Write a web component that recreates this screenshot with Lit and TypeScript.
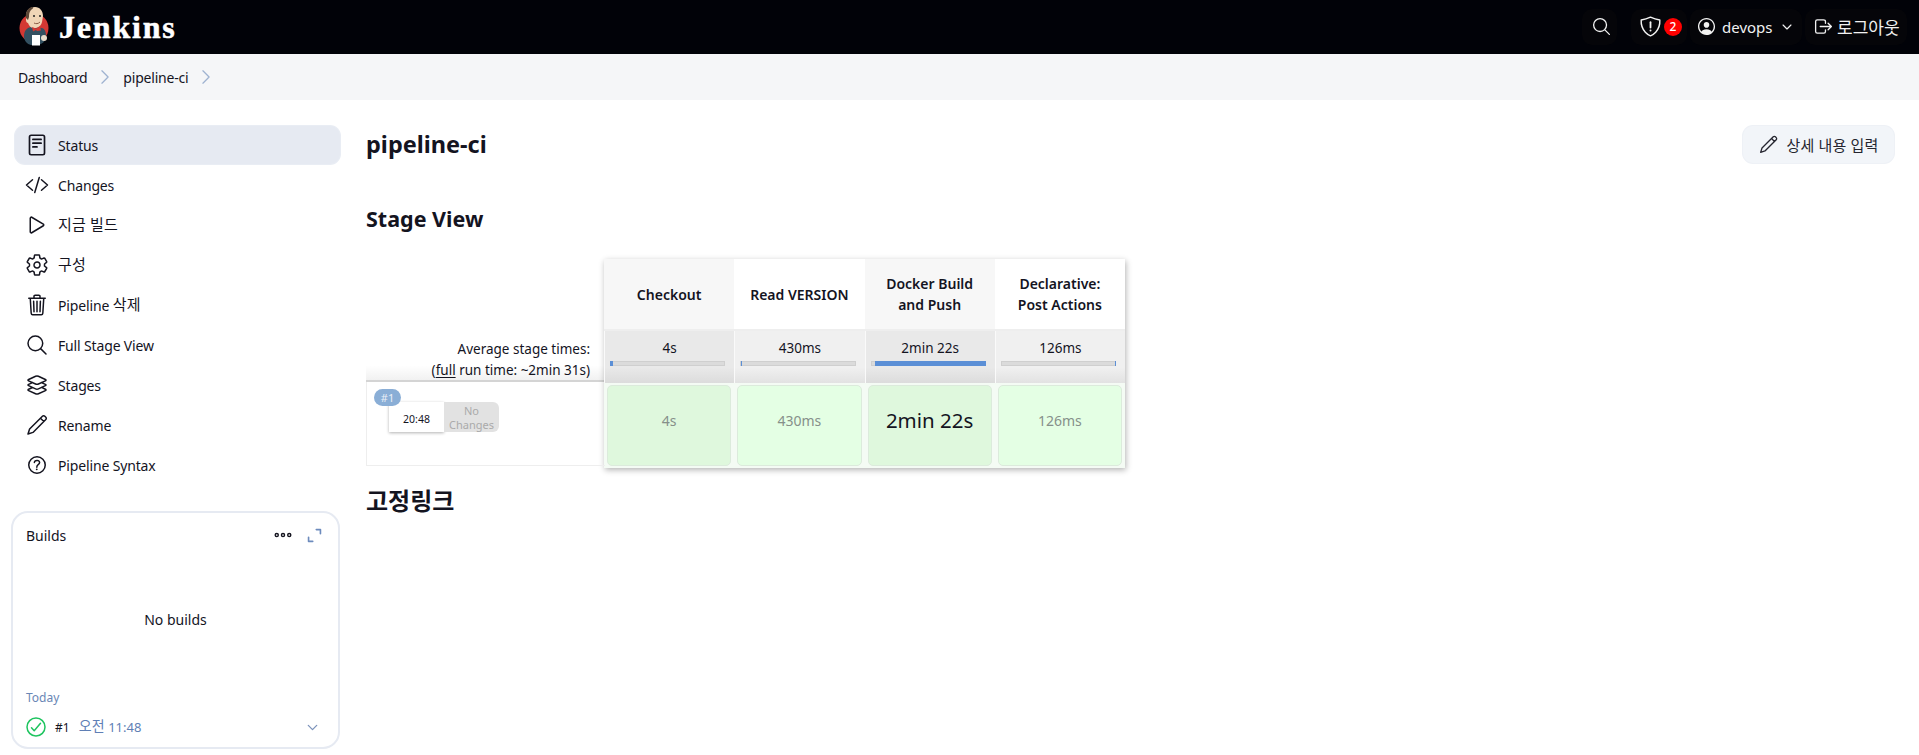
import { LitElement, html, css, svg } from "lit";
import { customElement } from "lit/decorators.js";

const ico = (body: unknown, cls = "") => html`<svg class="ico ${cls}" viewBox="0 0 512 512" fill="none" stroke="currentColor" stroke-width="32" stroke-linecap="round" stroke-linejoin="round">${body}</svg>`;

const I = {
  doc: svg`<rect x="96" y="48" width="320" height="416" rx="36" stroke-width="36"/><path d="M168 136h176M168 216h176M168 296h88" stroke-width="36"/>`,
  code: svg`<path d="M160 368L32 256l128-112M352 368l128-112-128-112M304 96l-96 320"/>`,
  play: svg`<path d="M112 111v290c0 17.44 17 28.52 31 20.16l247.9-148.86c12.12-7.29 12.12-25.93 0-33.22L143 90.84c-14-8.36-31 2.72-31 20.16z"/>`,
  gear: svg`<path d="M262.29 192.31a64 64 0 1057.4 57.4 64.13 64.13 0 00-57.4-57.4zM416.39 256a154.34 154.34 0 01-1.53 20.79l45.21 35.46a10.81 10.81 0 012.45 13.75l-42.77 74a10.81 10.81 0 01-13.14 4.59l-44.9-18.08a16.11 16.11 0 00-15.17 1.75A164.48 164.48 0 01325 400.8a15.94 15.94 0 00-8.82 12.14l-6.73 47.89a11.08 11.08 0 01-10.68 9.17h-85.54a11.11 11.11 0 01-10.69-8.87l-6.72-47.82a16.07 16.07 0 00-9-12.22 155.3 155.3 0 01-21.46-12.57 16 16 0 00-15.11-1.71l-44.89 18.07a10.81 10.81 0 01-13.14-4.58l-42.77-74a10.8 10.8 0 012.45-13.75l38.21-30a16.05 16.05 0 006-14.08c-.36-4.17-.58-8.33-.58-12.5s.21-8.27.58-12.35a16 16 0 00-6.07-13.94l-38.19-30A10.81 10.81 0 0149.48 186l42.77-74a10.81 10.81 0 0113.14-4.59l44.9 18.08a16.11 16.11 0 0015.17-1.75A164.48 164.48 0 01187 111.2a15.94 15.94 0 008.82-12.14l6.73-47.89A11.08 11.08 0 01213.23 42h85.54a11.11 11.11 0 0110.69 8.87l6.72 47.82a16.07 16.07 0 009 12.22 155.3 155.3 0 0121.46 12.57 16 16 0 0015.11 1.71l44.89-18.07a10.81 10.81 0 0113.14 4.58l42.77 74a10.8 10.8 0 01-2.45 13.75l-38.21 30a16.05 16.05 0 00-6.05 14.08c.33 4.14.55 8.3.55 12.47z"/>`,
  trash: svg`<path d="M112 112l20 320c.95 18.49 14.4 32 32 32h184c17.67 0 30.87-13.51 32-32l20-320M80 112h352M192 112V72h0a23.93 23.93 0 0124-24h80a23.93 23.93 0 0124 24h0v40M256 176v224M184 176l8 224M328 176l-8 224"/>`,
  search: svg`<path d="M221.09 64a157.09 157.09 0 10157.09 157.09A157.1 157.1 0 00221.09 64zM338.29 338.29L448 448"/>`,
  layers: svg`<path d="M434.8 137.65l-149.36-68.1c-16.19-7.4-42.69-7.4-58.88 0L77.3 137.65c-17.6 8-17.6 21.09 0 29.09l148 67.5c16.89 7.7 44.69 7.7 61.58 0l148-67.5c17.52-8 17.52-21.1-.08-29.09zM160 308.52l-82.7 37.11c-17.6 8-17.6 21.1 0 29.1l148 67.5c16.89 7.69 44.69 7.69 61.58 0l148-67.5c17.6-8 17.6-21.1 0-29.1l-79.94-38.47M160 204.48l-82.8 37.16c-17.6 8-17.6 21.1 0 29.1l148 67.49c16.89 7.7 44.69 7.7 61.58 0l148-67.49c17.7-8 17.7-21.1.1-29.1L352 204.48"/>`,
  pencil: svg`<path d="M372 68a36 36 0 0151 0l21 21a36 36 0 010 51L170 414 64 448l34-106zM330 110l72 72"/>`,
  help: svg`<path d="M256 80a176 176 0 10176 176A176 176 0 00256 80z"/><path d="M200 202.29s.84-17.5 19.57-32.57C230.68 160.77 244 158.18 256 158c10.93-.14 20.69 1.67 26.53 4.45 10 4.76 29.47 16.38 29.47 41.09 0 26-17 37.81-36.37 50.8S252 287.89 252 304"/><circle cx="250" cy="348" r="20" fill="currentColor" stroke="none"/>`,
  person: svg`<path fill="currentColor" stroke="none" d="M258.9 48C141.92 46.42 46.42 141.92 48 258.9c1.56 112.19 92.91 203.54 205.1 205.1 116.98 1.6 212.48-93.9 210.88-210.88C462.44 140.91 371.09 49.56 258.9 48zm126.42 327.25a4 4 0 01-6.14-.32 124.27 124.27 0 00-32.35-29.59C321.37 329 289.11 320 256 320s-65.37 9-90.83 25.34a124.24 124.24 0 00-32.35 29.58 4 4 0 01-6.14.32A175.32 175.32 0 0180 259c-1.63-97.31 78.22-178.76 175.57-179S432 158.81 432 256a175.32 175.32 0 01-46.68 119.25z"/><path fill="currentColor" stroke="none" d="M256 144c-19.72 0-37.55 7.39-50.22 20.82s-19 32-17.57 51.93C191.11 256 221.52 288 256 288s64.83-32 67.79-71.24c1.48-19.74-4.8-38.14-17.68-51.82C293.39 151.44 275.59 144 256 144z"/>`,
  logout: svg`<path d="M304 336v40a40 40 0 01-40 40H104a40 40 0 01-40-40V136a40 40 0 0140-40h152c22.09 0 48 17.91 48 40v40M368 336l80-80-80-80M176 256h256"/>`,
  shield: svg`<path d="M463.1 112.37C373.68 96.33 336.71 84.45 256 48c-80.71 36.45-117.68 48.33-207.1 64.37C32.7 369.13 240.58 457.79 256 464c15.42-6.21 223.3-94.87 207.1-351.63z"/><path d="M256 160v120" stroke-width="40"/><circle cx="256" cy="344" r="22" fill="currentColor" stroke="none"/>`,
  chev: svg`<path d="M112 184l144 144 144-144" stroke-width="44"/>`,
  right: svg`<path d="M184 112l144 144-144 144" stroke-width="30"/>`,
  check: svg`<path d="M448 256c0-106-86-192-192-192S64 150 64 256s86 192 192 192 192-86 192-192z"/><path d="M352 176L217.6 336 160 272"/>`,
  expand: svg`<path d="M304 96h112v112M208 416H96V304" stroke-width="44"/>`,
  more: svg`<circle cx="96" cy="256" r="40" stroke-width="36"/><circle cx="256" cy="256" r="40" stroke-width="36"/><circle cx="416" cy="256" r="40" stroke-width="36"/>`,
};

const menu: [unknown, unknown][] = [
  [I.code, "Changes"],
  [I.play, html`<span class="ko">지금 빌드</span>`],
  [I.gear, html`<span class="ko">구성</span>`],
  [I.trash, html`Pipeline <span class="ko">삭제</span>`],
  [I.search, "Full Stage View"],
  [I.layers, "Stages"],
  [I.pencil, "Rename"],
  [I.help, "Pipeline Syntax"],
];

const stages = [
  { name: ["Checkout"], time: "4s", from: 0, to: 2.5, big: false },
  { name: ["Read VERSION"], time: "430ms", from: 1, to: 1.6, big: false },
  { name: ["Docker Build", "and Push"], time: "2min 22s", from: 3.5, to: 100, big: true },
  { name: ["Declarative:", "Post Actions"], time: "126ms", from: 99.4, to: 100, big: false },
];

@customElement("app-root")
export class AppRoot extends LitElement {
  static styles = css`
    :host {
      display: block;
      font-family: "Noto Sans", "Noto Sans CJK KR", sans-serif;
      font-size: 14px;
      color: #14141f;
      background: #fff;
      height: 755px;
      overflow: hidden;
    }
    .ko { font-size: 15px; letter-spacing: 0.2px; line-height: 1; vertical-align: 1px; }
    .ico { display: block; width: 24px; height: 24px; flex: none; }
    header {
      height: 54px;
      background: #010208;
      color: #f2f2f2;
      display: flex;
      align-items: center;
      padding: 0 12px 0 15px;
    }
    .logo { width: 40px; height: 48px; display: block; }
    .brand {
      font-family: "Liberation Serif", serif;
      font-weight: 700;
      font-size: 32px;
      letter-spacing: 1.8px;
      color: #fff;
      margin-left: 4px;
      -webkit-text-stroke: 0.5px #fff;
    }
    .spacer { flex: 1; }
    .nav { display: flex; align-items: center; gap: 3px; margin-top: -1px; }
    .nav a {
      display: flex;
      align-items: center;
      height: 36px;
      border-radius: 10px;
      background: #050509;
      font-size: 15px;
      box-sizing: border-box;
    }
    .n-search { width: 35px; justify-content: center; margin-right: 11px; padding-left: 3px; }
    .n-search .ico { width: 21px; height: 21px; }
    .n-sec { width: 56px; padding-left: 8px; gap: 2px; }
    .n-sec .ico { width: 23px; height: 23px; }
    .badge {
      width: 18px; height: 18px; border-radius: 50%;
      background: #f00; color: #fff;
      font-size: 12px; font-weight: 500;
      display: flex; align-items: center; justify-content: center;
    }
    .n-user { width: 112px; padding-left: 6px; gap: 5px; }
    .n-user .ico.p { width: 21px; height: 21px; }
    .n-user .ico.c { width: 14px; height: 14px; margin-left: 2px; }
    .n-out { width: 102px; padding-left: 8px; gap: 3px; }
    .n-out .ico { width: 21px; height: 21px; }
    .n-out span { font-size: 17px; }
    .crumbs {
      height: 46px;
      background: #f5f6f8;
      display: flex;
      align-items: center;
      padding-left: 18px;
      font-size: 14px;
      letter-spacing: -0.2px;
    }
    .crumbs .dash { letter-spacing: -0.35px; }
    .crumbs .ico { width: 22px; height: 22px; color: #9fb3d1; margin: 0 7px; }
    .body { display: flex; }
    aside {
      width: 366px;
      flex: none;
      box-sizing: border-box;
      padding: 26px 0 0 15px;
    }
    .item {
      width: 325px;
      height: 38px;
      margin-bottom: 2px;
      box-sizing: border-box;
      display: flex;
      align-items: center;
      gap: 9px;
      padding-left: 10px;
      border-radius: 10px;
      letter-spacing: -0.15px;
    }
    .item.on { background: #e6eaf2; box-shadow: 0 0 0 1px #e9edf4; }
    .builds {
      margin: 27px 0 0 -4px;
      width: 329px;
      height: 238px;
      box-sizing: border-box;
      border: 2px solid #e6eaf2;
      border-radius: 17px;
      padding: 11px 13px 0;
      display: flex;
      flex-direction: column;
    }
    .b-head { display: flex; align-items: center; height: 22px; }
    .b-head .more { width: 20px; height: 20px; margin-right: 12px; }
    .b-head .exp { width: 19px; height: 19px; color: #6d8bbd; margin-right: 1px; }
    .none { text-align: center; margin-top: 64px; height: 79px; }
    .today { font-size: 12px; color: #6a86b5; }
    .row { display: flex; align-items: center; margin-top: 9px; }
    .row .ck { width: 24px; height: 24px; color: #1ec45f; margin-right: 7px; margin-left: -2px; }
    .row b { font-weight: 400; font-size: 12px; margin-right: 9px; }
    .row span { color: #5f7fb5; font-size: 13px; }
    .row .ko { font-size: 14px; }
    .row .c { width: 15px; height: 15px; color: #7c93bb; margin-left: auto; margin-right: 5px; }
    main { flex: 1; min-width: 0; padding: 26px 25px 0 0; }
    .top { display: flex; justify-content: space-between; align-items: center; height: 36px; }
    h1 { font-size: 23.5px; font-weight: 700; margin: 0; }
    h2 { font-size: 21.5px; font-weight: 700; margin: 0; line-height: 30px; }
    .edit {
      width: 151px; height: 37px;
      box-sizing: border-box;
      background: #f2f5f9;
      border-radius: 10px;
      box-shadow: 0 0 0 1px #eef1f6;
      display: flex; align-items: center; justify-content: center; gap: 7px;
      font-size: 15px;
      letter-spacing: 0.2px;
      color: #25252f;
    }
    .edit .ico { width: 21px; height: 21px; }
    .sv { margin-top: 42px; }
    .stage { display: flex; margin-top: 25px; }
    .left { width: 239px; flex: none; }
    .l-sp { height: 72px; }
    .l-avg {
      height: 51px;
      box-sizing: border-box;
      text-align: right;
      padding: 8px 15px 0 0;
      line-height: 21px;
      font-size: 13.5px;
      background: linear-gradient(#fff 70%, #f1f1f1);
      border-bottom: 2px solid #d4d4d4;
    }
    .l-avg u { text-underline-offset: 2px; }
    .l-run {
      height: 84px;
      box-sizing: border-box;
      border: 1px solid #eee;
      border-top: 0;
      border-right: 0;
      position: relative;
    }
    .tag {
      position: absolute; left: 7px; top: 7px;
      width: 27px; height: 17px; border-radius: 9px;
      background: #8aaed6; color: #e9eff7;
      font-size: 11px; line-height: 17px; text-align: center;
      z-index: 1;
    }
    .chip { position: absolute; left: 22px; top: 20px; display: flex; height: 30px; }
    .clock {
      width: 55px; background: #fff;
      box-shadow: 0 1px 3px rgba(0,0,0,.3);
      font-size: 10.5px; display: flex; align-items: center; justify-content: center;
      padding-top: 3px; box-sizing: border-box;
    }
    .nochg {
      width: 55px; background: #e2e2e2; color: #aaa;
      border-radius: 0 6px 6px 0;
      font-size: 11px; line-height: 14px; text-align: center;
      overflow: hidden; box-sizing: border-box; padding-top: 2px;
    }
    .tbl { display: grid; grid-template-columns: repeat(4, 130.25px); grid-template-rows: 72px 52px 85px; box-shadow: 1px 2px 6px rgba(0,0,0,.3); height: 209px; margin-left: -1px; }
    .th {
      display: flex; align-items: center; justify-content: center; text-align: center;
      font-weight: 600; font-size: 14px; line-height: 21px;
      border-bottom: 2px solid #eee; box-sizing: border-box;
    }
    .th.alt { background: #f7f7f7; }
    .avg {
      text-align: center;
      font-size: 13.5px;
      padding-top: 8px;
      box-sizing: border-box;
      background: linear-gradient(#f0f0f0 70%, #e2e2e2 100%);
      border-left: 1px solid #fafafa;
    }
    .avg.alt { background: linear-gradient(#e9e9e9 70%, #dcdcdc 100%); }
    .bar {
      position: relative; height: 5px; margin: 4px 9px 0 5px;
      background: #dbdbdb;
      box-shadow: inset 0 0 0 1px #cfcfcf;
    }
    .bar i { position: absolute; top: 0; bottom: 0; background: #5b8fd6; }
    .cell { padding: 2px 3px; box-sizing: border-box; background: #f4fbf4; }
    .cell div {
      height: 100%; box-sizing: border-box;
      background: #e4ffe4; border: 1px solid #dcebdc; border-radius: 5px;
      color: #86908a; font-size: 14px;
      display: flex; align-items: center; justify-content: center; padding-bottom: 11px;
    }
    .cell.alt div { background: #dff8dd; }
    .cell.big div { font-size: 20.5px; color: #14141f; }
    .perm { margin-top: 18px; font-size: 24px; }
  `;

  render() {
    return html`
      <header>
        <svg class="logo" viewBox="0 0 40 48">
          <circle cx="19" cy="25" r="14.5" fill="#d33833"/>
          <path d="M9 33c0-6 4-9 8-9l10 1c3 1 4 4 4 8 0 5-4 9-10 9h-5c-4-1-7-4-7-9z" fill="#335061"/>
          <path d="M11 13c0-6 4-9 9-9s8 4 8 9l-1 6c-1 4-4 6-8 6-3 0-5-2-6-5-1 0-2-1-2-3z" fill="#f0d6b7"/>
          <path d="M11 15c-1-6 2-10 6-11 2 0 1 2-1 3-2 2-2 5-2 7l-1 3z" fill="#5b4636"/>
          <circle cx="19" cy="13" r="1" fill="#222"/><circle cx="25" cy="13" r="1" fill="#222"/>
          <path d="M19 20c2 1 4 1 6-1" stroke="#8a5a44" stroke-width="1" fill="none"/>
          <path d="M17 24l4 1.500 4-2 1 4-4 .5-1-1-3 1.500z" fill="#d33833"/>
          <path d="M17 32h8v10.500h-8z" fill="#fff"/>
          <circle cx="29" cy="35" r="3" fill="#e8dccb"/>
        </svg>
        <span class="brand">Jenkins</span>
        <span class="spacer"></span>
        <nav class="nav">
          <a class="n-search">${ico(I.search)}</a>
          <a class="n-sec">${ico(I.shield)}<span class="badge">2</span></a>
          <a class="n-user">${ico(I.person, "p")}<span>devops</span>${ico(I.chev, "c")}</a>
          <a class="n-out">${ico(I.logout)}<span>로그아웃</span></a>
        </nav>
      </header>
      <div class="crumbs">
        <span class="dash">Dashboard</span>${ico(I.right)}
        <span>pipeline-ci</span>${ico(I.right)}
      </div>
      <div class="body">
        <aside>
          <div class="item on">${ico(I.doc)}<span>Status</span></div>
          ${menu.map(([i, t]) => html`<div class="item">${ico(i)}<span>${t}</span></div>`)}
          <section class="builds">
            <div class="b-head">
              <span>Builds</span><span class="spacer"></span>
              ${ico(I.more, "more")}${ico(I.expand, "exp")}
            </div>
            <div class="none">No builds</div>
            <div class="today">Today</div>
            <div class="row">
              ${ico(I.check, "ck")}<b>#1</b><span><span class="ko">오전</span> 11:48</span>${ico(I.chev, "c")}
            </div>
          </section>
        </aside>
        <main>
          <div class="top">
            <h1>pipeline-ci</h1>
            <div class="edit">${ico(I.pencil)}<span>상세 내용 입력</span></div>
          </div>
          <h2 class="sv">Stage View</h2>
          <div class="stage">
            <div class="left">
              <div class="l-sp"></div>
              <div class="l-avg">Average stage times:<br />(<u>full</u> run time: ~2min 31s)</div>
              <div class="l-run">
                <span class="tag">#1</span>
                <div class="chip"><div class="clock">20:48</div><div class="nochg">No Changes</div></div>
              </div>
            </div>
            <div class="tbl">
              ${stages.map((s, i) => html`<div class="th ${i % 2 ? "" : "alt"}"><span>${s.name.map((n, k) => html`${k ? html`<br />` : ""}${n}`)}</span></div>`)}
              ${stages.map((s, i) => html`<div class="avg ${i % 2 ? "" : "alt"}">${s.time}<div class="bar"><i style="left:${s.from}%;width:${s.to - s.from}%"></i></div></div>`)}
              ${stages.map((s, i) => html`<div class="cell ${i % 2 ? "" : "alt"} ${s.big ? "big" : ""}"><div>${s.time}</div></div>`)}
            </div>
          </div>
          <h2 class="perm">고정링크</h2>
        </main>
      </div>
    `;
  }
}
